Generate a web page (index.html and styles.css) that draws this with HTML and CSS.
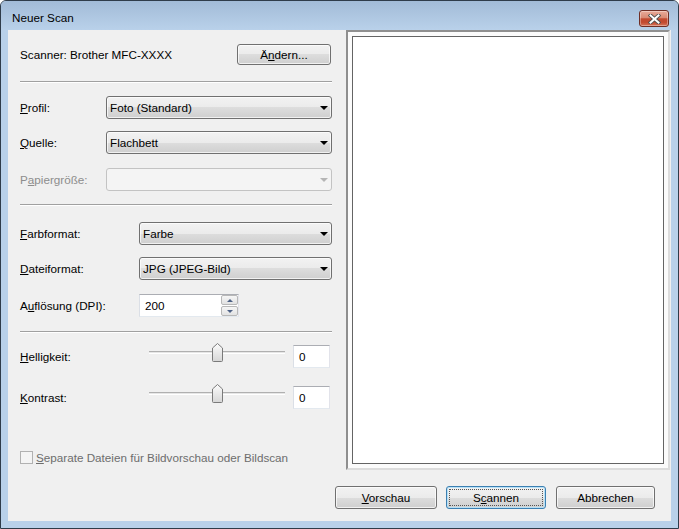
FILE: index.html
```html
<!DOCTYPE html>
<html lang="de">
<head>
<meta charset="UTF-8">
<title>Neuer Scan</title>
<link rel="stylesheet" href="styles.css">
</head>
<body>
<div class="window">
  <div class="titlebar">
    <span class="title">Neuer Scan</span>
    <span class="close">
      <svg width="13" height="10" viewBox="0 0 13 10">
        <path d="M2.5 1.5 L10.5 8.5 M10.5 1.5 L2.5 8.5" stroke="#505050" stroke-width="3.8" stroke-linecap="square"/>
        <path d="M2.5 1.5 L10.5 8.5 M10.5 1.5 L2.5 8.5" stroke="#ffffff" stroke-width="2" stroke-linecap="square"/>
      </svg>
    </span>
  </div>
  <div class="client">
    <div class="main">
      <div class="settings">
        <div class="row row-scanner">
          <span>Scanner: Brother MFC-XXXX</span>
          <button class="btn btn-change">Ä<u>n</u>dern...</button>
        </div>
        <hr class="sep sep-top">

        <div class="row row-profil">
          <label class="lbl lbl-a"><u>P</u>rofil:</label>
          <div class="combo"><span>Foto (Standard)</span><i class="arrow"></i></div>
        </div>
        <div class="row row-quelle">
          <label class="lbl lbl-a"><u>Q</u>uelle:</label>
          <div class="combo"><span>Flachbett</span><i class="arrow"></i></div>
        </div>
        <div class="row row-papier">
          <label class="lbl lbl-a disabled">P<u>a</u>piergröße:</label>
          <div class="combo combo-disabled"><span></span><i class="arrow"></i></div>
        </div>
        <hr class="sep sep-mid">

        <div class="row row-farb">
          <label class="lbl lbl-b"><u>F</u>arbformat:</label>
          <div class="combo"><span>Farbe</span><i class="arrow"></i></div>
        </div>
        <div class="row row-datei">
          <label class="lbl lbl-b"><u>D</u>ateiformat:</label>
          <div class="combo"><span>JPG (JPEG-Bild)</span><i class="arrow"></i></div>
        </div>
        <div class="row row-dpi">
          <label class="lbl lbl-b">A<u>u</u>flösung (DPI):</label>
          <div class="field spin">
            <span class="spin-value">200</span>
            <div class="spin-buttons">
              <span class="spin-btn"><i class="spin-up"></i></span>
              <span class="spin-btn"><i class="spin-down"></i></span>
            </div>
          </div>
        </div>
        <hr class="sep sep-low">

        <div class="row row-hell">
          <label class="lbl lbl-c"><u>H</u>elligkeit:</label>
          <div class="slider">
            <div class="slider-track"></div>
            <svg class="slider-thumb" width="11" height="19" viewBox="0 0 11 19">
              <defs>
                <linearGradient id="tg1" x1="0" y1="0" x2="0" y2="1">
                  <stop offset="0" stop-color="#fcfcfc"/>
                  <stop offset="1" stop-color="#d6d6d6"/>
                </linearGradient>
              </defs>
              <path d="M0.5 5 L5.5 0.5 L10.5 5 V17.5 Q10.5 18.5 9.5 18.5 H1.5 Q0.5 18.5 0.5 17.5 Z" fill="url(#tg1)" stroke="#7a7a7a"/>
            </svg>
          </div>
          <div class="field value">0</div>
        </div>
        <div class="row row-kontrast">
          <label class="lbl lbl-c"><u>K</u>ontrast:</label>
          <div class="slider">
            <div class="slider-track"></div>
            <svg class="slider-thumb" width="11" height="19" viewBox="0 0 11 19">
              <defs>
                <linearGradient id="tg2" x1="0" y1="0" x2="0" y2="1">
                  <stop offset="0" stop-color="#fcfcfc"/>
                  <stop offset="1" stop-color="#d6d6d6"/>
                </linearGradient>
              </defs>
              <path d="M0.5 5 L5.5 0.5 L10.5 5 V17.5 Q10.5 18.5 9.5 18.5 H1.5 Q0.5 18.5 0.5 17.5 Z" fill="url(#tg2)" stroke="#7a7a7a"/>
            </svg>
          </div>
          <div class="field value">0</div>
        </div>

        <div class="row row-check">
          <span class="check"></span>
          <span class="disabled-text"><u>S</u>eparate Dateien für Bildvorschau oder Bildscan</span>
        </div>
      </div>
      <div class="preview">
        <div class="preview-page"></div>
      </div>
    </div>
    <div class="actions">
      <button class="btn btn-preview"><u>V</u>orschau</button>
      <button class="btn btn-default">S<u>c</u>annen</button>
      <button class="btn btn-cancel">Abbrechen</button>
    </div>
  </div>
</div>
</body>
</html>
```

FILE: styles.css
```css
body {
  margin: 0;
  background-color: #ffffff;
  font-family: 'Liberation Sans', Arial, sans-serif;
  font-size: 11.7px;
  color: #000;
}
.window {
  width: 679px;
  height: 529px;
  box-sizing: border-box;
  border: 1px solid #2f3c4a;
  border-radius: 6px 6px 0 0;
  background-color: #b9d1ea;
  display: flex;
  flex-direction: column;
  overflow: hidden;
}
.titlebar {
  height: 29px;
  box-sizing: border-box;
  padding: 9px 9px 0 11px;
  display: flex;
  justify-content: space-between;
  align-items: flex-start;
  background: linear-gradient(#a2bbd7, #b9d1ea);
}
.title {
  line-height: 16px;
}
.close {
  width: 30px;
  height: 17px;
  box-sizing: border-box;
  border: 1px solid #6f2e25;
  border-radius: 3px;
  background: linear-gradient(#e9ab9a, #d98a74 45%, #c24a30 52%, #c24a30 75%, #d6745a);
  display: flex;
  align-items: center;
  justify-content: center;
  box-shadow: inset 0 0 0 1px rgba(255,255,255,0.35);
}
.client {
  margin: 0 7px;
  height: 491px;
  background-color: #f0f0f0;
  display: flex;
  flex-direction: column;
}
.main {
  display: flex;
  height: 440px;
}
.settings {
  width: 338px;
  box-sizing: border-box;
  padding: 0 14px 0 12px;
}
.row {
  display: flex;
  align-items: center;
  height: 23px;
}
.row-scanner {
  height: 21px;
  margin-top: 14px;
  justify-content: space-between;
}
.row-profil { margin-top: 13px; }
.row-quelle { margin-top: 12px; }
.row-papier { margin-top: 14px; }
.row-farb { margin-top: 16px; }
.row-datei { margin-top: 12px; }
.row-dpi { margin-top: 14px; }
.row-hell { margin-top: 12px; }
.row-kontrast { margin-top: 18px; }
.row-check {
  height: 16px;
  margin-top: 40px;
}

.sep {
  height: 0;
  border: 0;
  border-top: 1px solid #a0a0a0;
  border-bottom: 1px solid #ffffff;
  margin: 0;
}
.sep-top { margin-top: 16px; }
.sep-mid { margin-top: 13px; }
.sep-low { margin-top: 14px; }

.lbl {
  flex: none;
}
.lbl-a { width: 86px; }
.lbl-b { width: 119px; }
.lbl-c { width: 129px; }
.disabled {
  color: #8d8d8d;
}

.btn {
  height: 23px;
  box-sizing: border-box;
  border: 1px solid #707070;
  border-radius: 3px;
  background: linear-gradient(#f2f2f2 0%, #ebebeb 50%, #dddddd 50%, #cfcfcf 100%);
  box-shadow: inset 0 0 0 1px rgba(255,255,255,0.7);
  font: inherit;
  color: #000;
  padding: 0;
  position: relative;
}
.btn-change {
  width: 94px;
  height: 21px;
  margin-right: 1px;
}
.btn-preview { width: 102px; }
.btn-default {
  width: 100px;
  border-color: #3c7fb1;
  box-shadow: inset 0 0 0 1px #b6e1f7;
}
.btn-default::after {
  content: '';
  position: absolute;
  left: 2px;
  top: 2px;
  right: 2px;
  bottom: 2px;
  border: 1px dotted #555;
}
.btn-cancel { width: 99px; }

.combo {
  flex: 1;
  height: 23px;
  box-sizing: border-box;
  display: flex;
  align-items: center;
  justify-content: space-between;
  padding: 0 3px 0 3px;
  border: 1px solid #707070;
  border-radius: 3px;
  background: linear-gradient(#f2f2f2 0%, #ebebeb 50%, #dddddd 50%, #cfcfcf 100%);
  box-shadow: inset 0 0 0 1px rgba(255,255,255,0.7);
}
.arrow {
  width: 0;
  height: 0;
  border-left: 4px solid transparent;
  border-right: 4px solid transparent;
  border-top: 4px solid #000;
}
.combo-disabled {
  border-color: #c3c3c3;
  background: #f4f4f4;
  box-shadow: none;
}
.combo-disabled .arrow {
  border-top-color: #b5b5b5;
}

.field {
  height: 23px;
  box-sizing: border-box;
  background-color: #ffffff;
  border: 1px solid;
  border-color: #abadb3 #e2e3ea #e3e9ef #dbdfe6;
  display: flex;
  align-items: center;
}
.spin {
  width: 100px;
  padding: 0 0 0 5px;
}
.spin-value {
  flex: 1;
}
.spin-buttons {
  display: flex;
  flex-direction: column;
  gap: 1px;
}
.spin-btn {
  width: 17px;
  height: 10px;
  box-sizing: border-box;
  border: 1px solid #b8b8b8;
  border-radius: 2px;
  background: linear-gradient(#f6f6f6, #e2e2e2);
  display: flex;
  align-items: center;
  justify-content: center;
}
.spin-up {
  border-left: 3px solid transparent;
  border-right: 3px solid transparent;
  border-bottom: 3px solid #4d6185;
}
.spin-down {
  border-left: 3px solid transparent;
  border-right: 3px solid transparent;
  border-top: 3px solid #4d6185;
}

.slider {
  position: relative;
  width: 136px;
  height: 19px;
  align-self: flex-start;
  margin-top: -2px;
  flex: none;
}
.slider-track {
  margin-top: 8px;
  height: 3px;
  box-sizing: border-box;
  border-top: 1px solid #b0b0b0;
  border-bottom: 1px solid #ffffff;
  background-color: #e6e6e6;
}
.slider-thumb {
  position: absolute;
  left: 63px;
  top: 0;
}
.value {
  width: 37px;
  margin-left: 8px;
  padding-left: 5px;
}

.check {
  width: 13px;
  height: 13px;
  box-sizing: border-box;
  border: 1px solid #b1b1b1;
  background-color: #f4f4f4;
  margin-right: 3px;
}
.disabled-text {
  color: #6d6d6d;
}

.preview {
  width: 324px;
  height: 440px;
  box-sizing: border-box;
  border: 2px solid;
  border-color: #8f8f8f #dcdcdc #dcdcdc #8f8f8f;
  padding: 4px;
  background-color: #fbfbfb;
}
.preview-page {
  height: 100%;
  box-sizing: border-box;
  border: 1px solid #646464;
  background-color: #ffffff;
}

.actions {
  display: flex;
  justify-content: flex-end;
  padding: 16px 16px 0 0;
}
.btn-default { margin-left: 9px; }
.btn-cancel { margin-left: 10px; }
```
